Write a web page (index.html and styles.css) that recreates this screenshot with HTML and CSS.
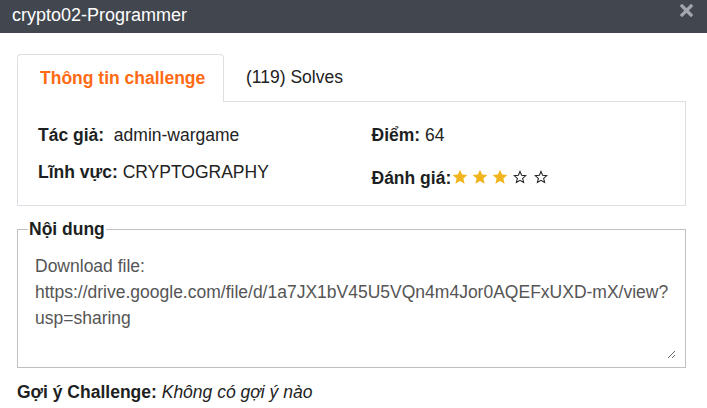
FILE: index.html
```html
<!DOCTYPE html>
<html lang="vi">
<head>
<meta charset="utf-8">
<link rel="stylesheet" href="styles.css">
</head>
<body>
<div class="modal">
  <div class="modal-header">
    <span class="modal-title">crypto02-Programmer</span>
    <svg class="close" width="13" height="13" viewBox="0 0 13 13"><path d="M2 2 L11 11 M11 2 L2 11" stroke="#a3a7ad" stroke-width="3.2" stroke-linecap="square"/></svg>
  </div>
  <div class="modal-body">
    <div class="tabs">
      <div class="tab active">Thông tin challenge</div>
      <div class="tab">(119) Solves</div>
    </div>
    <div class="panel">
      <div class="col">
        <div class="row"><b>Tác giả:</b>&nbsp; admin-wargame</div>
        <div class="row"><b>Lĩnh vực:</b> CRYPTOGRAPHY</div>
      </div>
      <div class="col">
        <div class="row"><b>Điểm:</b> 64</div>
        <div class="row rate"><b>Đánh giá:</b><span class="stars">
          <svg class="star on" viewBox="0 0 24 24"><path d="M12 1l3.2 7.3 7.8.7-5.9 5.2 1.8 7.8L12 17.9 5.1 22l1.8-7.8L1 9l7.8-.7z"/></svg>
          <svg class="star on" viewBox="0 0 24 24"><path d="M12 1l3.2 7.3 7.8.7-5.9 5.2 1.8 7.8L12 17.9 5.1 22l1.8-7.8L1 9l7.8-.7z"/></svg>
          <svg class="star on" viewBox="0 0 24 24"><path d="M12 1l3.2 7.3 7.8.7-5.9 5.2 1.8 7.8L12 17.9 5.1 22l1.8-7.8L1 9l7.8-.7z"/></svg>
          <svg class="star off" viewBox="0 0 24 24"><path d="M12 2.5l2.8 6.6 7.2.6-5.5 4.7 1.7 7L12 17.7l-6.2 3.7 1.7-7L2 9.7l7.2-.6z"/></svg>
          <svg class="star off" viewBox="0 0 24 24"><path d="M12 2.5l2.8 6.6 7.2.6-5.5 4.7 1.7 7L12 17.7l-6.2 3.7 1.7-7L2 9.7l7.2-.6z"/></svg>
        </span></div>
      </div>
    </div>
    <fieldset class="content">
      <legend>Nội dung</legend>
      <textarea class="desc" readonly>Download file:
https://drive.google.com/file/d/1a7JX1bV45U5VQn4m4Jor0AQEFxUXD-mX/view?usp=sharing</textarea>
    </fieldset>
    <div class="hint"><b>Gợi ý Challenge:</b> <i>Không có gợi ý nào</i></div>
  </div>
</div>
</body>
</html>
```
FILE: styles.css
```css
* { box-sizing: border-box; }
html, body { margin: 0; padding: 0; background: #fff; }
body { font-family: "Liberation Sans", Arial, sans-serif; font-size: 17.5px; color: #222; }
.modal-header {
  height: 33px;
  background: #42474f;
  display: flex;
  align-items: center;
  justify-content: space-between;
  padding: 0 14px 2px 12px;
}
.modal-title { color: #fff; font-size: 18px; }
.close { display: block; margin-top: -10px; }
.modal-body { padding: 21px 21px 0 17px; }
.tabs { display: flex; height: 47px; }
.tab {
  display: flex; align-items: center;
  padding: 0 0 1px 22px;
  color: #222;
}
.tab.active {
  width: 207px;
  border: 1px solid #dcdfe3;
  border-bottom: none;
  border-radius: 4px 4px 0 0;
  color: #ff6a13;
  font-weight: bold;
  background: #fff;
  position: relative;
  z-index: 1;
  margin-bottom: -1px;
  height: 48px;
}
.panel {
  border: 1px solid #dcdfe3;
  height: 105px;
  display: grid;
  grid-template-columns: 1fr 1fr;
  padding-top: 23px;
}
.col { padding-left: 20px; }
.row { height: 37px; color: #222; }
.row b { color: #1d1f22; }
.rate { margin-top: 4px; display: flex; align-items: center; height: 24px; }
.stars { display: flex; align-items: center; gap: 4px; margin: -3px 0 0 1px; }
.star { width: 16px; height: 16px; display: block; flex: none; }
.star.on path { fill: #f0b51c; }
.star.off { width: 14px; height: 14px; margin: 0 2px 0 1px; }
.star.off path { fill: none; stroke: #222; stroke-width: 1.8; stroke-linejoin: miter; }
.content {
  margin: 13px 0 0 0;
  border: 1px solid #c0c0c0;
  padding: 0 9px 8px 16px;
  height: 149px;
  min-width: 0;
}
.content legend { font-weight: bold; padding: 0 1px; margin-left: -6px; color: #1d1f22; }
.desc {
  display: block;
  width: 100%;
  height: 100%;
  border: none;
  outline: none;
  padding: 13px 0 0 1px;
  font-family: "Liberation Sans", Arial, sans-serif;
  font-size: 17.5px;
  line-height: 26px;
  color: #555;
  background: #fff;
  resize: vertical;
  overflow: hidden;
}
.hint { margin-top: 14px; color: #1d1f22; }
.hint i { color: #222; }
```
